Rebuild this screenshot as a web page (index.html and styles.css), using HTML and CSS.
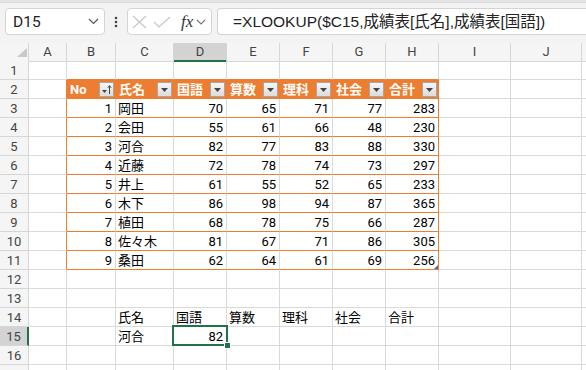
FILE: index.html
```html
<html>
  <head>
    <meta charset="utf-8">
    <link rel="stylesheet" href="styles.css">
  </head>
  <body>
    <div class="topline"></div>
    <div class="bar">
      <div class="namebox">
        <span>D15</span>
        <svg width="11" height="7" viewBox="0 0 11 7"><polyline points="1,1 5.5,5.5 10,1" fill="none" stroke="#555" stroke-width="1.2"/></svg>
      </div>
      <svg class="dots" width="22" height="27" viewBox="0 0 22 27"><circle cx="11" cy="10" r="1.3" fill="#444"/><circle cx="11" cy="14" r="1.3" fill="#444"/><circle cx="11" cy="18" r="1.3" fill="#444"/></svg>
      <div class="fxbox">
        <svg width="15" height="14" viewBox="0 0 15 14"><path d="M1 1 L14 13 M14 1 L1 13" stroke="#c6c6c6" stroke-width="1.1"/></svg>
        <svg width="18" height="12" viewBox="0 0 18 12"><polyline points="1,6 6,11 17,1" fill="none" stroke="#c6c6c6" stroke-width="1.1"/></svg>
        <span class="fx">fx</span>
        <svg width="10" height="6" viewBox="0 0 10 6"><polyline points="1,1 5,5 9,1" fill="none" stroke="#777" stroke-width="1.1"/></svg>
      </div>
      <div class="formula">=XLOOKUP($C15,成績表[氏名],成績表[国語])</div>
    </div>

    <div class="sheet">
      <div class="row hdr">
        <div class="c corner"><svg width="12" height="10" viewBox="0 0 12 10"><polygon points="11,0 11,9 1,9" fill="#c9c9c9"/></svg></div>
        <div class="c">A</div><div class="c">B</div><div class="c">C</div><div class="c hsel">D</div><div class="c">E</div>
        <div class="c">F</div><div class="c">G</div><div class="c">H</div><div class="c">I</div><div class="c">J</div><div class="c"></div>
      </div>
      <div class="row">
        <div class="c rh">1</div><div class="c"></div>
        <div class="c tt"></div><div class="c tt"></div><div class="c tt"></div><div class="c tt"></div><div class="c tt"></div><div class="c tt"></div><div class="c tt"></div>
        <div class="c"></div><div class="c"></div><div class="c"></div>
      </div>
      <div class="row">
        <div class="c rh">2</div><div class="c tl"></div>
        <div class="c th">No<span class="fb"><svg width="13" height="13" viewBox="0 0 13 13"><polygon points="2,7 7,7 4.5,10" fill="#444"/><path d="M9.5 11 L9.5 3 M7.8 4.8 L9.5 2.6 L11.2 4.8" fill="none" stroke="#444" stroke-width="1"/></svg></span></div>
        <div class="c th">氏名<span class="fb"><svg width="13" height="13" viewBox="0 0 13 13"><polygon points="3,5 10,5 6.5,9" fill="#444"/></svg></span></div>
        <div class="c th">国語<span class="fb"><svg width="13" height="13" viewBox="0 0 13 13"><polygon points="3,5 10,5 6.5,9" fill="#444"/></svg></span></div>
        <div class="c th">算数<span class="fb"><svg width="13" height="13" viewBox="0 0 13 13"><polygon points="3,5 10,5 6.5,9" fill="#444"/></svg></span></div>
        <div class="c th">理科<span class="fb"><svg width="13" height="13" viewBox="0 0 13 13"><polygon points="3,5 10,5 6.5,9" fill="#444"/></svg></span></div>
        <div class="c th">社会<span class="fb"><svg width="13" height="13" viewBox="0 0 13 13"><polygon points="3,5 10,5 6.5,9" fill="#444"/></svg></span></div>
        <div class="c th">合計<span class="fb"><svg width="13" height="13" viewBox="0 0 13 13"><polygon points="3,5 10,5 6.5,9" fill="#444"/></svg></span></div>
        <div class="c"></div><div class="c"></div><div class="c"></div>
      </div>
      <div class="row">
        <div class="c rh">3</div><div class="c tl"></div>
        <div class="c tb n">1</div><div class="c tb">岡田</div><div class="c tb n">70</div><div class="c tb n">65</div><div class="c tb n">71</div><div class="c tb n">77</div><div class="c tb tr n">283</div>
        <div class="c"></div><div class="c"></div><div class="c"></div>
      </div>
      <div class="row">
        <div class="c rh">4</div><div class="c tl"></div>
        <div class="c tb n">2</div><div class="c tb">会田</div><div class="c tb n">55</div><div class="c tb n">61</div><div class="c tb n">66</div><div class="c tb n">48</div><div class="c tb tr n">230</div>
        <div class="c"></div><div class="c"></div><div class="c"></div>
      </div>
      <div class="row">
        <div class="c rh">5</div><div class="c tl"></div>
        <div class="c tb n">3</div><div class="c tb">河合</div><div class="c tb n">82</div><div class="c tb n">77</div><div class="c tb n">83</div><div class="c tb n">88</div><div class="c tb tr n">330</div>
        <div class="c"></div><div class="c"></div><div class="c"></div>
      </div>
      <div class="row">
        <div class="c rh">6</div><div class="c tl"></div>
        <div class="c tb n">4</div><div class="c tb">近藤</div><div class="c tb n">72</div><div class="c tb n">78</div><div class="c tb n">74</div><div class="c tb n">73</div><div class="c tb tr n">297</div>
        <div class="c"></div><div class="c"></div><div class="c"></div>
      </div>
      <div class="row">
        <div class="c rh">7</div><div class="c tl"></div>
        <div class="c tb n">5</div><div class="c tb">井上</div><div class="c tb n">61</div><div class="c tb n">55</div><div class="c tb n">52</div><div class="c tb n">65</div><div class="c tb tr n">233</div>
        <div class="c"></div><div class="c"></div><div class="c"></div>
      </div>
      <div class="row">
        <div class="c rh">8</div><div class="c tl"></div>
        <div class="c tb n">6</div><div class="c tb">木下</div><div class="c tb n">86</div><div class="c tb n">98</div><div class="c tb n">94</div><div class="c tb n">87</div><div class="c tb tr n">365</div>
        <div class="c"></div><div class="c"></div><div class="c"></div>
      </div>
      <div class="row">
        <div class="c rh">9</div><div class="c tl"></div>
        <div class="c tb n">7</div><div class="c tb">植田</div><div class="c tb n">68</div><div class="c tb n">78</div><div class="c tb n">75</div><div class="c tb n">66</div><div class="c tb tr n">287</div>
        <div class="c"></div><div class="c"></div><div class="c"></div>
      </div>
      <div class="row">
        <div class="c rh">10</div><div class="c tl"></div>
        <div class="c tb n">8</div><div class="c tb">佐々木</div><div class="c tb n">81</div><div class="c tb n">67</div><div class="c tb n">71</div><div class="c tb n">86</div><div class="c tb tr n">305</div>
        <div class="c"></div><div class="c"></div><div class="c"></div>
      </div>
      <div class="row">
        <div class="c rh">11</div><div class="c tl"></div>
        <div class="c tb n">9</div><div class="c tb">桑田</div><div class="c tb n">62</div><div class="c tb n">64</div><div class="c tb n">61</div><div class="c tb n">69</div><div class="c tb tr n grip">256</div>
        <div class="c"></div><div class="c"></div><div class="c"></div>
      </div>
      <div class="row">
        <div class="c rh">12</div><div class="c"></div><div class="c"></div><div class="c"></div><div class="c"></div><div class="c"></div>
        <div class="c"></div><div class="c"></div><div class="c"></div><div class="c"></div><div class="c"></div><div class="c"></div>
      </div>
      <div class="row">
        <div class="c rh">13</div><div class="c"></div><div class="c"></div><div class="c"></div><div class="c"></div><div class="c"></div>
        <div class="c"></div><div class="c"></div><div class="c"></div><div class="c"></div><div class="c"></div><div class="c"></div>
      </div>
      <div class="row">
        <div class="c rh">14</div><div class="c"></div><div class="c"></div><div class="c">氏名</div><div class="c">国語</div><div class="c">算数</div>
        <div class="c">理科</div><div class="c">社会</div><div class="c">合計</div><div class="c"></div><div class="c"></div><div class="c"></div>
      </div>
      <div class="row">
        <div class="c rh rsel">15</div><div class="c"></div><div class="c"></div><div class="c">河合</div><div class="c n active">82</div><div class="c"></div>
        <div class="c"></div><div class="c"></div><div class="c"></div><div class="c"></div><div class="c"></div><div class="c"></div>
      </div>
      <div class="row">
        <div class="c rh">16</div><div class="c"></div><div class="c"></div><div class="c"></div><div class="c"></div><div class="c"></div>
        <div class="c"></div><div class="c"></div><div class="c"></div><div class="c"></div><div class="c"></div><div class="c"></div>
      </div>
      <div class="row">
        <div class="c rh"></div><div class="c"></div><div class="c"></div><div class="c"></div><div class="c"></div><div class="c"></div>
        <div class="c"></div><div class="c"></div><div class="c"></div><div class="c"></div><div class="c"></div><div class="c"></div>
      </div>
    </div>
  </body>
</html>
```

FILE: styles.css
```css
body {
    margin: 0;
    width: 586px;
    height: 370px;
    overflow: hidden;
    background: #fff;
    font-family: Roboto, "Noto Sans CJK JP", sans-serif;
    color: #000;
}
.topline {
    height: 2px;
    background: #e4e4e4;
    border-bottom: 1px solid #d8d8d8;
}
.bar {
    height: 40px;
    box-sizing: border-box;
    padding-top: 5px;
    background: #f3f3f3;
    display: flex;
    align-items: flex-start;
}
.namebox {
    margin-left: 5px;
    width: 100px;
    height: 27px;
    box-sizing: border-box;
    border: 1px solid #d4d4d4;
    border-radius: 4px;
    background: #fff;
    display: flex;
    align-items: center;
    justify-content: space-between;
    padding: 0 5px 0 7px;
    font-size: 15.5px;
    color: #222;
}
.dots {
    display: block;
}
.fxbox {
    width: 85px;
    height: 27px;
    box-sizing: border-box;
    border: 1px solid #d4d4d4;
    border-radius: 4px;
    background: #fff;
    display: flex;
    align-items: center;
    padding-left: 4px;
    gap: 6px;
}
.fx {
    font-family: "Liberation Serif", serif;
    font-style: italic;
    font-size: 17px;
    color: #333;
    margin-left: 4px;
    margin-right: -3px;
}
.formula {
    flex: 1;
    margin-left: 5px;
    height: 27px;
    box-sizing: border-box;
    border: 1px solid #d4d4d4;
    border-right: none;
    border-radius: 4px 0 0 4px;
    background: #fff;
    padding-left: 15px;
    font-family: "Liberation Sans", "Noto Sans CJK JP", sans-serif;
    font-size: 15.5px;
    line-height: 25px;
    color: #222;
    white-space: nowrap;
}

.sheet {
    --cols: 29px 38px 49px 58px 53px 53px 53px 53px 53px 72px 71px 1fr;
}
.row {
    display: grid;
    grid-template-columns: var(--cols);
    height: 19px;
}
.c {
    box-sizing: border-box;
    border-right: 1px solid #dadada;
    border-bottom: 1px solid #dadada;
    padding: 1px 2px 0 2px;
    font-size: 13px;
    line-height: 17px;
    white-space: nowrap;
}
.n {
    text-align: right;
    padding-right: 3px;
}
.hdr {
    height: 18px;
    background: #f5f5f5;
}
.hdr .c {
    border-color: #d6d6d6;
    text-align: center;
    color: #444;
    padding-top: 0;
}
.corner svg {
    display: block;
    margin: 5px 0 0 14px;
}
.hsel {
    background: #d3d3d3;
    border-bottom: 2px solid #217346 !important;
}
.rh {
    background: #f5f5f5;
    border-color: #d6d6d6;
    text-align: center;
    color: #444;
}
.rsel {
    background: #d3d3d3;
    border-right: 2px solid #217346;
}

/* table 成績表 */
.tt {
    border-bottom-color: #ed7d31;
}
.tl {
    border-right-color: #ed7d31;
}
.tb {
    border-bottom-color: #ed7d31;
}
.tr {
    border-right-color: #ed7d31;
}
.th {
    background: #ed7d31;
    border-color: #ed7d31;
    color: #fff;
    font-weight: bold;
    display: flex;
    justify-content: space-between;
    align-items: center;
    padding: 0 1px 0 3px;
}
.fb {
    width: 15px;
    height: 15px;
    box-sizing: border-box;
    border: 1px solid #a6a6a6;
    background: linear-gradient(#f6f6f6, #dcdcdc);
    display: flex;
    align-items: center;
    justify-content: center;
}
.fb svg {
    display: block;
}
.grip {
    position: relative;
}
.grip::after {
    content: "";
    position: absolute;
    right: 0;
    bottom: 0;
    border-left: 4px solid transparent;
    border-bottom: 4px solid #4a68a8;
}

.active {
    position: relative;
}
.active::before {
    content: "";
    position: absolute;
    left: -2px;
    top: -2px;
    right: -2px;
    bottom: -1px;
    border: 2px solid #217346;
}
.active::after {
    content: "";
    position: absolute;
    right: -5px;
    bottom: -4px;
    width: 5px;
    height: 5px;
    background: #217346;
    border: 1px solid #fff;
}
```
